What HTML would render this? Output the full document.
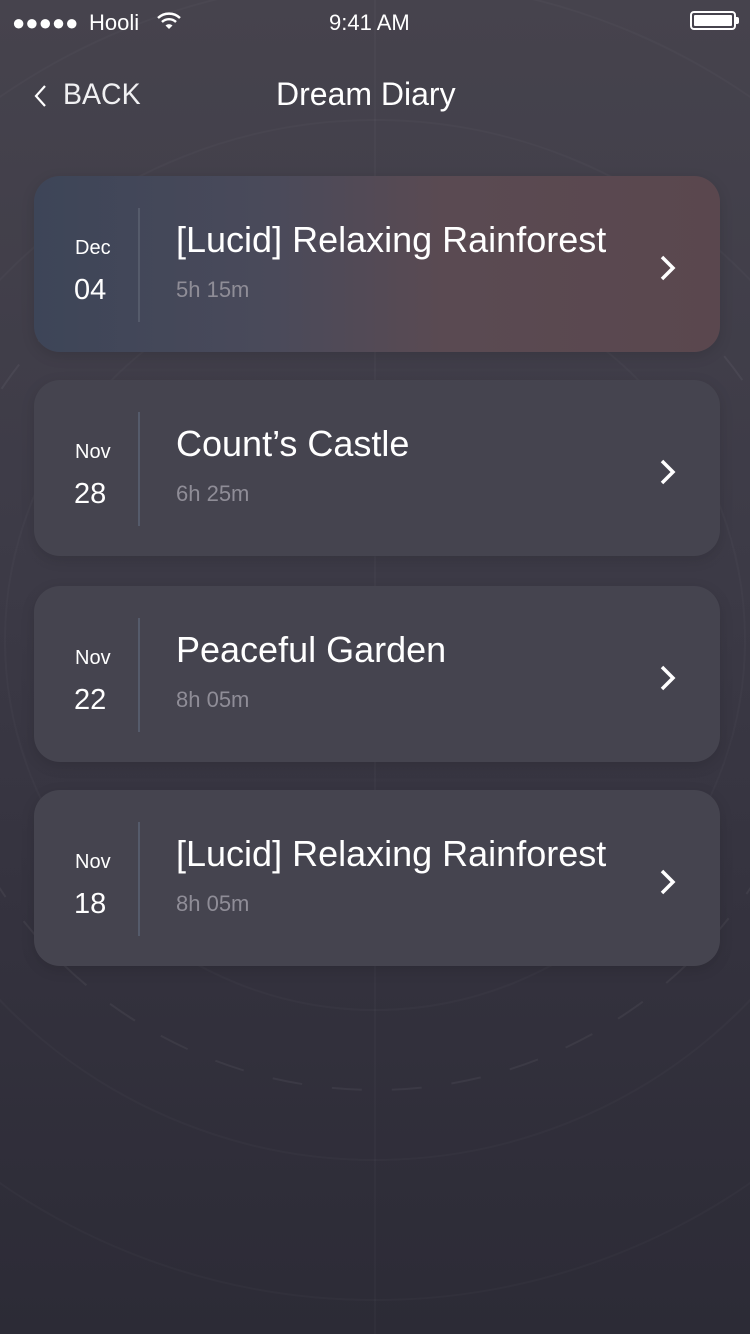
<!DOCTYPE html>
<html><head><meta charset="utf-8"><style>
*{margin:0;padding:0;box-sizing:border-box}
html,body{width:750px;height:1334px;overflow:hidden}
body{font-family:"Liberation Sans",sans-serif;color:#fff;
background:linear-gradient(180deg,#46434d 0%,#3d3b47 40%,#34323e 70%,#2c2b36 100%);position:relative}
.abs{position:absolute}
.card{position:absolute;left:34px;width:686px;height:176px;border-radius:26px;background:#45444f;box-shadow:0 4px 14px rgba(0,0,0,.12)}
.card.first{background:linear-gradient(90deg,#3d4558 0%,#4a4a5a 35%,#5a4a52 60%,#5a474e 100%)}
.mon{position:absolute;left:41px;top:61px;font-size:20px;color:#fff}
.day{position:absolute;left:40px;top:98px;font-size:29px;color:#fff}
.div{position:absolute;left:104px;top:32px;width:2px;height:114px;background:#555b6b}
.tt{position:absolute;left:142px;top:43px;font-size:36px;color:#fff;white-space:nowrap}
.du{position:absolute;left:142px;top:101px;font-size:22px;color:#8f8d97}
.ch{position:absolute;left:624px;top:78px}
</style></head><body>
<svg class="abs" style="left:0;top:0" width="750" height="1334">
<g fill="none" stroke="#ffffff" stroke-opacity="0.025" stroke-width="2">
<circle cx="375" cy="640" r="520"/><circle cx="375" cy="640" r="660"/><circle cx="375" cy="640" r="800"/>
<circle cx="375" cy="640" r="450" stroke-dasharray="30 30" stroke-opacity="0.05"/><circle cx="375" cy="640" r="370"/>
<line x1="375" y1="0" x2="375" y2="1334"/>
</g></svg>
<div class="abs" style="left:12px;top:10px;font-size:22px">●●●●●</div>
<div class="abs" style="left:89px;top:10px;font-size:22px">Hooli</div>
<svg class="abs" style="left:156px;top:11px" width="26" height="20" viewBox="0 0 26 20"><g fill="none" stroke="#fff" stroke-width="2.4"><path d="M2 7a16 16 0 0 1 22 0"/><path d="M6 11a10 10 0 0 1 14 0"/></g><path d="M9.5 14.5a5 5 0 0 1 7 0L13 18z" fill="#fff"/></svg>
<div class="abs" style="left:329px;top:10px;font-size:22px">9:41 AM</div>
<div class="abs" style="left:690px;top:11px;width:46px;height:19px;border:2px solid #fff;border-radius:4px;padding:2px"><div style="width:100%;height:100%;background:#fff;border-radius:1px"></div></div>
<div class="abs" style="left:736px;top:17px;width:3px;height:7px;background:#fff;border-radius:0 2px 2px 0"></div>
<svg class="abs" style="left:32px;top:84px" width="16" height="24"><path d="M13 2L4 12l9 10" fill="none" stroke="#fff" stroke-width="2.2"/></svg>
<div class="abs" style="left:63px;top:78px;font-size:30px;color:#f0f0f2;transform:scaleX(0.95);transform-origin:left">BACK</div>
<div class="abs" style="left:276px;top:76px;font-size:32px">Dream Diary</div>

<div class="card first" style="top:176px"><div class="mon">Dec</div><div class="day">04</div><div class="div"></div><div class="tt">[Lucid] Relaxing Rainforest</div><div class="du">5h 15m</div><svg class="ch" width="20" height="28"><path d="M4 3l11 11L4 25" fill="none" stroke="#fff" stroke-width="3.5"/></svg></div>
<div class="card" style="top:380px"><div class="mon">Nov</div><div class="day">28</div><div class="div"></div><div class="tt">Count’s Castle</div><div class="du">6h 25m</div><svg class="ch" width="20" height="28"><path d="M4 3l11 11L4 25" fill="none" stroke="#fff" stroke-width="3.5"/></svg></div>
<div class="card" style="top:586px"><div class="mon">Nov</div><div class="day">22</div><div class="div"></div><div class="tt">Peaceful Garden</div><div class="du">8h 05m</div><svg class="ch" width="20" height="28"><path d="M4 3l11 11L4 25" fill="none" stroke="#fff" stroke-width="3.5"/></svg></div>
<div class="card" style="top:790px"><div class="mon">Nov</div><div class="day">18</div><div class="div"></div><div class="tt">[Lucid] Relaxing Rainforest</div><div class="du">8h 05m</div><svg class="ch" width="20" height="28"><path d="M4 3l11 11L4 25" fill="none" stroke="#fff" stroke-width="3.5"/></svg></div>
</body></html>
